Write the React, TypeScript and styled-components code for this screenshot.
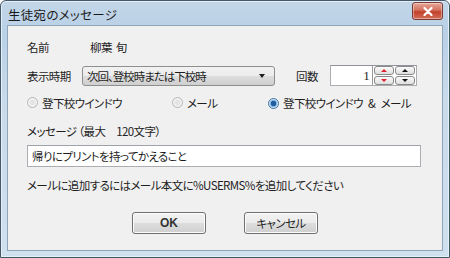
import { createGlobalStyle, styled } from "styled-components";

const GlobalStyle = createGlobalStyle`
  html, body {
    margin: 0;
    padding: 0;
    background: #ffffff;
  }
  body {
    font-family: "Noto Sans CJK JP", "Noto Sans", sans-serif;
    font-size: 11.5px;
    font-feature-settings: "palt";
    letter-spacing: -0.6px;
    color: #1e1e1e;
  }
`;

const Window = styled.div`
  width: 450px;
  height: 258px;
  box-sizing: border-box;
  display: flex;
  flex-direction: column;
  border: 1px solid #44586a;
  border-radius: 6px 6px 0 0;
  background: linear-gradient(180deg, #c3d6e8 0%, #b9d0e6 12%, #c9dbeb 40%, #cfe1ef 100%);
  box-shadow: inset 0 0 0 1px #e6f0f8;
`;

const TitleBar = styled.div`
  height: 24px;
  display: flex;
  align-items: center;
  justify-content: space-between;
  padding: 0 6px 0 7px;
  flex-shrink: 0;
`;

const Title = styled.span`
  font-size: 12.5px;
  letter-spacing: 0.3px;
  color: #1a1a1a;
  margin-top: 2px;
`;

const CloseButton = styled.div`
  width: 29px;
  height: 16px;
  margin-top: -4px;
  border: 1px solid #7a3a32;
  border-radius: 3px;
  background: linear-gradient(180deg, #e8a89a 0%, #d4705c 45%, #c2412a 55%, #d4705c 100%);
  display: flex;
  align-items: center;
  justify-content: center;
  box-shadow: inset 0 0 0 1px rgba(255, 255, 255, 0.4);
`;

const Client = styled.div`
  flex: 1;
  margin: 0 6px 6px;
  background: #f0f0f0;
  border: 1px solid #8ea4b8;
  padding: 0 0 0 19px;
  display: flex;
  flex-direction: column;
`;

const Row = styled.div<{ $h: number; $mt?: number }>`
  display: flex;
  align-items: center;
  height: ${p => p.$h}px;
  margin-top: ${p => p.$mt ?? 0}px;
`;

const Label = styled.span<{ $w?: number }>`
  width: ${p => (p.$w ? `${p.$w}px` : "auto")};
  white-space: nowrap;
`;

const Combo = styled.div`
  width: 193px;
  height: 20px;
  box-sizing: border-box;
  border: 1px solid #8e8f8f;
  border-radius: 3px;
  background: linear-gradient(180deg, #f2f2f2 0%, #ebebeb 50%, #dddddd 51%, #cfcfcf 100%);
  display: flex;
  align-items: center;
  justify-content: space-between;
  padding: 0 9px 0 4px;
`;

const ComboText = styled.span`
  letter-spacing: -1px;
`;

const Caret = styled.span`
  width: 0;
  height: 0;
  border-left: 3.5px solid transparent;
  border-right: 3.5px solid transparent;
  border-top: 4px solid #1e1e1e;
`;

const SpinBox = styled.div`
  margin-left: 12px;
  width: 87px;
  height: 21px;
  box-sizing: border-box;
  border: 1px solid #abadb3;
  border-top-color: #8f939a;
  background: #ffffff;
  display: flex;
  align-items: center;
  padding-right: 1px;
`;

const SpinValue = styled.span`
  flex: 1;
  text-align: right;
  padding-right: 1px;
  font-family: "Liberation Serif", serif;
  font-size: 13px;
  letter-spacing: 0;
`;

const SpinColumn = styled.div<{ $divider?: boolean }>`
  display: flex;
  flex-direction: column;
  gap: 1px;
  margin-left: 1px;
  border-left: ${p => (p.$divider ? "1px solid #9a9a9a" : "none")};
  padding-left: ${p => (p.$divider ? 1 : 0)}px;
`;

const SpinButton = styled.div<{ $down?: boolean; $red?: boolean }>`
  width: 18px;
  height: 7px;
  border: 1px solid #8a8a8a;
  border-radius: 3px;
  background: linear-gradient(180deg, #fbfbfb, #dedede);
  display: flex;
  align-items: center;
  justify-content: center;

  &::after {
    content: "";
    width: 0;
    height: 0;
    border-left: 3px solid transparent;
    border-right: 3px solid transparent;
    ${p =>
      p.$down
        ? `border-top: 3px solid ${p.$red ? "#e0202a" : "#111"};`
        : `border-bottom: 3px solid ${p.$red ? "#e0202a" : "#111"};`}
  }
`;

const Radio = styled.span<{ $checked?: boolean }>`
  display: inline-flex;
  align-items: center;
  white-space: pre;

  &::before {
    content: "";
    width: 11px;
    height: 11px;
    box-sizing: border-box;
    margin-right: 4px;
    border-radius: 50%;
    border: 1px solid ${p => (p.$checked ? "#3b76a8" : "#b5b5b5")};
    background: ${p =>
      p.$checked
        ? "radial-gradient(circle, #1d5fa0 0 2.5px, #7fb0de 3px, #e6eef6 4.5px)"
        : "radial-gradient(circle, #e4e4e4 0 2px, #f4f4f4 4px)"};
  }
`;

const Amp = styled.span`
  margin: 0 5px;
  letter-spacing: 0;
`;

const TextInput = styled.div`
  width: 394px;
  height: 22px;
  box-sizing: border-box;
  border: 1px solid #abadb3;
  border-top-color: #9ea2a9;
  background: #ffffff;
  display: flex;
  align-items: center;
  padding-left: 4px;
`;

const ButtonRow = styled.div`
  display: flex;
  gap: 38px;
  margin-top: 18px;
  margin-left: 105px;
`;

const Button = styled.div`
  width: 74px;
  height: 22px;
  box-sizing: border-box;
  border: 1px solid #707070;
  border-radius: 3px;
  background: linear-gradient(180deg, #f2f2f2 0%, #ebebeb 50%, #dddddd 51%, #cfcfcf 100%);
  box-shadow: inset 0 0 0 1px #fcfcfc;
  display: flex;
  align-items: center;
  justify-content: center;
`;

const OkText = styled.span`
  font-family: "Liberation Sans", sans-serif;
  font-size: 12px;
  font-weight: bold;
  letter-spacing: 0;
  color: #333;
`;

export default function App() {
  return (
    <>
      <GlobalStyle />
      <Window>
        <TitleBar>
          <Title>生徒宛のメッセージ</Title>
          <CloseButton>
            <svg width="10" height="9" viewBox="0 0 10 9">
              <path d="M1.5 1 L8.5 8 M8.5 1 L1.5 8" stroke="#ffffff" strokeWidth="2.2" strokeLinecap="round" />
            </svg>
          </CloseButton>
        </TitleBar>
        <Client>
          <Row $h={20} $mt={11}>
            <Label $w={63}>名前</Label>
            <Label>柳葉&nbsp;&nbsp;旬</Label>
          </Row>
          <Row $h={21} $mt={8}>
            <Label $w={55}>表示時期</Label>
            <Combo>
              <ComboText>次回、登校時または下校時</ComboText>
              <Caret />
            </Combo>
            <Label style={{ marginLeft: 21 }}>回数</Label>
            <SpinBox>
              <SpinValue>1</SpinValue>
              <SpinColumn $divider>
                <SpinButton $red />
                <SpinButton $red $down />
              </SpinColumn>
              <SpinColumn>
                <SpinButton />
                <SpinButton $down />
              </SpinColumn>
            </SpinBox>
          </Row>
          <Row $h={18} $mt={8}>
            <Label $w={145}>
              <Radio>登下校ウインドウ</Radio>
            </Label>
            <Label $w={96}>
              <Radio>メール</Radio>
            </Label>
            <Radio $checked>
              登下校ウインドウ<Amp>&amp;</Amp>メール
            </Radio>
          </Row>
          <Row $h={18} $mt={10}>
            <Label>メッセージ （最大　120文字）</Label>
          </Row>
          <Row $h={22} $mt={5}>
            <TextInput>帰りにプリントを持ってかえること</TextInput>
          </Row>
          <Row $h={18} $mt={9}>
            <Label>メールに追加するにはメール本文に%USERMS%を追加してください</Label>
          </Row>
          <ButtonRow>
            <Button>
              <OkText>OK</OkText>
            </Button>
            <Button>キャンセル</Button>
          </ButtonRow>
        </Client>
      </Window>
    </>
  );
}
